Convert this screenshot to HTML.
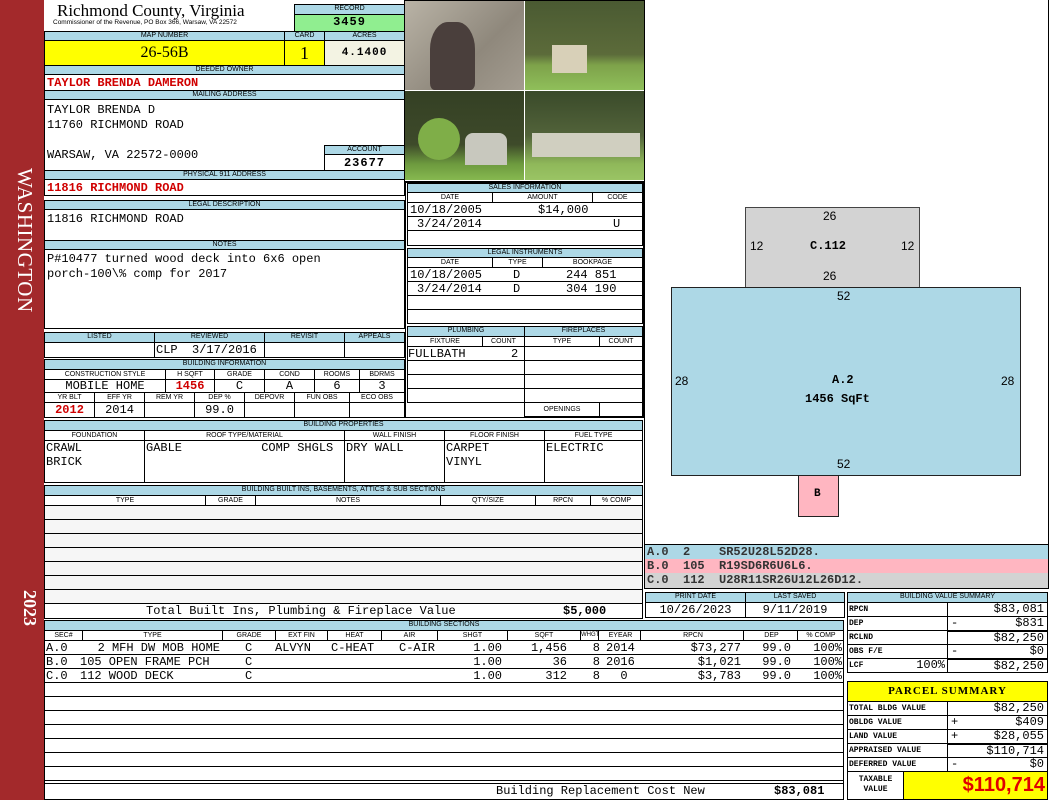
<!DOCTYPE html>
<html><head><meta charset="utf-8"><style>
*{margin:0;padding:0}
body{width:1050px;height:800px;position:relative;background:#fff;overflow:hidden;font-family:"Liberation Sans",sans-serif}
.a{position:absolute;box-sizing:border-box}
.h{position:absolute;box-sizing:border-box;background:#add8e6;border:1px solid #000;font:7px/8px "Liberation Sans",sans-serif;text-align:center;color:#000;white-space:nowrap;overflow:hidden}
.l{position:absolute;box-sizing:border-box;background:#fff;border:1px solid #000;font:7px/9px "Liberation Sans",sans-serif;text-align:center;white-space:nowrap;overflow:hidden}
.c{position:absolute;box-sizing:border-box;background:#fff;border:1px solid #000;font:12px/13px "Liberation Mono",monospace;white-space:nowrap;overflow:hidden}
.m{font:12px/14px "Liberation Mono",monospace;white-space:pre}
.t{position:absolute;font:12px/14px "Liberation Mono",monospace;white-space:pre}
.tr{position:absolute;font:12px/14px "Liberation Mono",monospace;white-space:pre;text-align:right}
.r{color:#d00000;font-weight:bold}
.ctr{text-align:center}.rt{text-align:right;padding-right:3px}
.vr{position:absolute;width:1px;background:#000}
</style></head><body>
<div class="a" style="left:0;top:0;width:44px;height:800px;background:#a3292b"></div>
<div class="a" style="left:7px;top:153px;width:30px;height:175px;color:#fff;font:21px 'Liberation Serif',serif;writing-mode:vertical-rl;text-align:center;letter-spacing:0.5px">WASHINGTON</div>
<div class="a" style="left:10px;top:590px;width:30px;height:50px;color:#fff;font:bold 18px 'Liberation Serif',serif;writing-mode:vertical-rl">2023</div>

<div class="a" style="left:57px;top:2px;font:17px/18px 'Liberation Serif',serif">Richmond County, Virginia</div>
<div class="a" style="left:53px;top:19px;font:6.5px/8px 'Liberation Sans',sans-serif">Commissioner of the Revenue, PO Box 366, Warsaw, VA 22572</div>
<div class="h" style="left:294px;top:4px;width:111px;height:11px">RECORD</div>
<div class="c ctr" style="left:294px;top:14px;width:111px;height:18px;background:#90ee90;font-weight:bold;letter-spacing:1px;line-height:15px">3459</div>

<div class="h" style="left:44px;top:31px;width:241px;height:10px">MAP NUMBER</div>
<div class="h" style="left:284px;top:31px;width:41px;height:10px">CARD</div>
<div class="h" style="left:324px;top:31px;width:81px;height:10px">ACRES</div>
<div class="c ctr" style="left:44px;top:40px;width:241px;height:26px;background:#ffff00;font:16px/24px 'Liberation Serif',serif">26-56B</div>
<div class="c ctr" style="left:284px;top:40px;width:41px;height:26px;background:#ffff00;font:18px/24px 'Liberation Serif',serif">1</div>
<div class="c ctr" style="left:324px;top:40px;width:81px;height:26px;background:#f3f3e3;font-weight:bold;font-size:11px;line-height:24px;letter-spacing:1px">4.1400</div>

<div class="h" style="left:44px;top:65px;width:361px;height:10px">DEEDED OWNER</div>
<div class="c r" style="left:44px;top:74px;width:361px;height:17px;padding-left:2px;line-height:17px">TAYLOR BRENDA DAMERON</div>
<div class="h" style="left:44px;top:90px;width:361px;height:10px">MAILING ADDRESS</div>
<div class="c m" style="left:44px;top:99px;width:361px;height:72px;padding:3px 2px;line-height:15px">TAYLOR BRENDA D
11760 RICHMOND ROAD

WARSAW, VA 22572-0000</div>
<div class="h" style="left:324px;top:145px;width:81px;height:10px">ACCOUNT</div>
<div class="c ctr" style="left:324px;top:154px;width:81px;height:17px;font-weight:bold;letter-spacing:1px;line-height:16px">23677</div>
<div class="h" style="left:44px;top:170px;width:361px;height:10px">PHYSICAL 911 ADDRESS</div>
<div class="c r" style="left:44px;top:179px;width:361px;height:17px;padding-left:2px;line-height:17px">11816 RICHMOND ROAD</div>

<div class="h" style="left:44px;top:200px;width:361px;height:10px">LEGAL DESCRIPTION</div>
<div class="c m" style="left:44px;top:209px;width:361px;height:32px;padding:2px">11816 RICHMOND ROAD</div>
<div class="h" style="left:44px;top:240px;width:361px;height:10px">NOTES</div>
<div class="c m" style="left:44px;top:249px;width:361px;height:80px;padding:2px 2px;line-height:15px">P#10477 turned wood deck into 6x6 open
porch-100\% comp for 2017</div>

<div class="h" style="left:44px;top:332px;width:111px;height:11px">LISTED</div>
<div class="h" style="left:154px;top:332px;width:111px;height:11px">REVIEWED</div>
<div class="h" style="left:264px;top:332px;width:81px;height:11px">REVISIT</div>
<div class="h" style="left:344px;top:332px;width:61px;height:11px">APPEALS</div>
<div class="c" style="left:44px;top:342px;width:111px;height:16px"></div>
<div class="c m" style="left:154px;top:342px;width:111px;height:16px;padding-left:1px">CLP  3/17/2016</div>
<div class="c" style="left:264px;top:342px;width:81px;height:16px"></div>
<div class="c" style="left:344px;top:342px;width:61px;height:16px"></div>

<div class="h" style="left:44px;top:359px;width:361px;height:11px">BUILDING INFORMATION</div>
<div class="l" style="left:44px;top:369px;width:122px;height:11px">CONSTRUCTION STYLE</div>
<div class="l" style="left:165px;top:369px;width:50px;height:11px">H SQFT</div>
<div class="l" style="left:214px;top:369px;width:51px;height:11px">GRADE</div>
<div class="l" style="left:264px;top:369px;width:51px;height:11px">COND</div>
<div class="l" style="left:314px;top:369px;width:46px;height:11px">ROOMS</div>
<div class="l" style="left:359px;top:369px;width:46px;height:11px">BDRMS</div>
<div class="c ctr" style="left:44px;top:379px;width:122px;height:14px;line-height:13px">MOBILE HOME</div>
<div class="c ctr r" style="left:165px;top:379px;width:50px;height:14px;line-height:13px">1456</div>
<div class="c ctr" style="left:214px;top:379px;width:51px;height:14px;line-height:13px">C</div>
<div class="c ctr" style="left:264px;top:379px;width:51px;height:14px;line-height:13px">A</div>
<div class="c ctr" style="left:314px;top:379px;width:46px;height:14px;line-height:13px">6</div>
<div class="c ctr" style="left:359px;top:379px;width:46px;height:14px;line-height:13px">3</div>
<div class="l" style="left:44px;top:392px;width:51px;height:11px">YR BLT</div>
<div class="l" style="left:94px;top:392px;width:51px;height:11px">EFF YR</div>
<div class="l" style="left:144px;top:392px;width:51px;height:11px">REM YR</div>
<div class="l" style="left:194px;top:392px;width:51px;height:11px">DEP %</div>
<div class="l" style="left:244px;top:392px;width:51px;height:11px">DEPOVR</div>
<div class="l" style="left:294px;top:392px;width:56px;height:11px">FUN OBS</div>
<div class="l" style="left:349px;top:392px;width:56px;height:11px">ECO OBS</div>
<div class="c ctr r" style="left:44px;top:402px;width:51px;height:16px;line-height:15px">2012</div>
<div class="c ctr" style="left:94px;top:402px;width:51px;height:16px;line-height:15px">2014</div>
<div class="c" style="left:144px;top:402px;width:51px;height:16px"></div>
<div class="c ctr" style="left:194px;top:402px;width:51px;height:16px;line-height:15px">99.0</div>
<div class="c" style="left:244px;top:402px;width:51px;height:16px"></div>
<div class="c" style="left:294px;top:402px;width:56px;height:16px"></div>
<div class="c" style="left:349px;top:402px;width:56px;height:16px"></div>

<!-- photos -->
<div class="a" style="left:404px;top:0;width:241px;height:182px;background:#fff;border:1px solid #000"></div>
<div class="a" style="left:405px;top:1px;width:119px;height:89px;background:linear-gradient(135deg,#b9b3a6,#8f887c 60%,#a39c90)"></div>
<div class="a" style="left:430px;top:22px;width:45px;height:68px;background:#4a3f3c;border-radius:40% 40% 10% 10%"></div>
<div class="a" style="left:525px;top:1px;width:119px;height:89px;background:linear-gradient(180deg,#4a5a32,#5c6b3a 60%,#7ea24a 72%,#8fbf5a)"></div>
<div class="a" style="left:552px;top:45px;width:35px;height:28px;background:#d8d0b8"></div>
<div class="a" style="left:405px;top:91px;width:119px;height:89px;background:linear-gradient(180deg,#344024,#3e4a2a 60%,#6d9a3e 82%,#86b850)"></div>
<div class="a" style="left:465px;top:133px;width:42px;height:32px;background:#c8c8be;border-radius:8px 8px 0 0"></div>
<div class="a" style="left:418px;top:118px;width:42px;height:42px;background:#7fae48;border-radius:50%"></div>
<div class="a" style="left:525px;top:91px;width:119px;height:89px;background:linear-gradient(180deg,#3a4a2a,#52633a 50%,#8fb85a 82%,#9ac464)"></div>
<div class="a" style="left:532px;top:133px;width:108px;height:24px;background:#d0cfc0"></div>

<!-- sales -->
<div class="a" style="left:405px;top:182px;width:239px;height:236px;border:1px solid #000;background:#fff"></div>
<div class="h" style="left:407px;top:183px;width:236px;height:10px">SALES INFORMATION</div>
<div class="l" style="left:407px;top:192px;width:86px;height:11px">DATE</div>
<div class="l" style="left:492px;top:192px;width:101px;height:11px">AMOUNT</div>
<div class="l" style="left:592px;top:192px;width:51px;height:11px">CODE</div>
<div class="c" style="left:407px;top:202px;width:236px;height:15px"></div>
<div class="c" style="left:407px;top:216px;width:236px;height:15px"></div>
<div class="c" style="left:407px;top:230px;width:236px;height:16px"></div>
<div class="t" style="left:410px;top:203px">10/18/2005</div>
<div class="t" style="left:538px;top:203px">$14,000</div>
<div class="t" style="left:417px;top:217px">3/24/2014</div>
<div class="t" style="left:613px;top:217px">U</div>
<div class="h" style="left:407px;top:248px;width:236px;height:10px">LEGAL INSTRUMENTS</div>
<div class="l" style="left:407px;top:257px;width:86px;height:11px">DATE</div>
<div class="l" style="left:492px;top:257px;width:51px;height:11px">TYPE</div>
<div class="l" style="left:542px;top:257px;width:101px;height:11px">BOOKPAGE</div>
<div class="c" style="left:407px;top:267px;width:236px;height:15px"></div>
<div class="c" style="left:407px;top:281px;width:236px;height:15px"></div>
<div class="c" style="left:407px;top:295px;width:236px;height:15px"></div>
<div class="c" style="left:407px;top:309px;width:236px;height:15px"></div>
<div class="t" style="left:410px;top:268px">10/18/2005</div>
<div class="t" style="left:513px;top:268px">D</div>
<div class="t" style="left:566px;top:268px">244 851</div>
<div class="t" style="left:417px;top:282px">3/24/2014</div>
<div class="t" style="left:513px;top:282px">D</div>
<div class="t" style="left:566px;top:282px">304 190</div>
<div class="h" style="left:407px;top:326px;width:118px;height:11px">PLUMBING</div>
<div class="h" style="left:524px;top:326px;width:119px;height:11px">FIREPLACES</div>
<div class="l" style="left:407px;top:336px;width:76px;height:11px">FIXTURE</div>
<div class="l" style="left:482px;top:336px;width:43px;height:11px">COUNT</div>
<div class="l" style="left:524px;top:336px;width:76px;height:11px">TYPE</div>
<div class="l" style="left:599px;top:336px;width:44px;height:11px">COUNT</div>
<div class="c" style="left:407px;top:346px;width:118px;height:15px"></div>
<div class="t" style="left:408px;top:347px">FULLBATH</div>
<div class="t" style="left:511px;top:347px">2</div>
<div class="c" style="left:407px;top:360px;width:118px;height:15px"></div>
<div class="c" style="left:407px;top:374px;width:118px;height:15px"></div>
<div class="c" style="left:407px;top:388px;width:118px;height:15px"></div>
<div class="c" style="left:524px;top:346px;width:119px;height:15px"></div>
<div class="c" style="left:524px;top:360px;width:119px;height:15px"></div>
<div class="c" style="left:524px;top:374px;width:119px;height:15px"></div>
<div class="c" style="left:524px;top:388px;width:119px;height:15px"></div>
<div class="l" style="left:524px;top:402px;width:76px;height:15px;line-height:13px">OPENINGS</div>
<div class="c" style="left:599px;top:402px;width:44px;height:15px"></div>

<!-- building properties -->
<div class="h" style="left:44px;top:420px;width:599px;height:11px">BUILDING PROPERTIES</div>
<div class="l" style="left:44px;top:430px;width:101px;height:11px">FOUNDATION</div>
<div class="l" style="left:144px;top:430px;width:201px;height:11px">ROOF TYPE/MATERIAL</div>
<div class="l" style="left:344px;top:430px;width:101px;height:11px">WALL FINISH</div>
<div class="l" style="left:444px;top:430px;width:101px;height:11px">FLOOR FINISH</div>
<div class="l" style="left:544px;top:430px;width:99px;height:11px">FUEL TYPE</div>
<div class="c m" style="left:44px;top:440px;width:101px;height:43px;padding:0 1px">CRAWL
BRICK</div>
<div class="c m" style="left:144px;top:440px;width:201px;height:43px;padding:0 1px">GABLE           COMP SHGLS</div>
<div class="c m" style="left:344px;top:440px;width:101px;height:43px;padding:0 1px">DRY WALL</div>
<div class="c m" style="left:444px;top:440px;width:101px;height:43px;padding:0 1px">CARPET
VINYL</div>
<div class="c m" style="left:544px;top:440px;width:99px;height:43px;padding:0 1px">ELECTRIC</div>

<!-- built ins -->
<div class="h" style="left:44px;top:485px;width:599px;height:11px">BUILDING BUILT INS, BASEMENTS, ATTICS &amp; SUB SECTIONS</div>
<div class="l" style="left:44px;top:495px;width:162px;height:11px">TYPE</div>
<div class="l" style="left:205px;top:495px;width:51px;height:11px">GRADE</div>
<div class="l" style="left:255px;top:495px;width:186px;height:11px">NOTES</div>
<div class="l" style="left:440px;top:495px;width:96px;height:11px">QTY/SIZE</div>
<div class="l" style="left:535px;top:495px;width:56px;height:11px">RPCN</div>
<div class="l" style="left:590px;top:495px;width:53px;height:11px">% COMP</div>
<div class="a" style="left:44px;top:505px;width:599px;height:99px;border:1px solid #000;background:repeating-linear-gradient(180deg,#f6f6f6 0 13px,#000 13px 14px)"></div>
<div class="c" style="left:44px;top:603px;width:599px;height:16px"></div>
<div class="t" style="left:146px;top:604px">Total Built Ins, Plumbing &amp; Fireplace Value</div>
<div class="t" style="left:563px;top:604px;font-weight:bold">$5,000</div>

<!-- building sections -->
<div class="h" style="left:44px;top:620px;width:800px;height:11px">BUILDING SECTIONS</div>
<div class="a" style="left:44px;top:630px;width:800px;height:11px;border:1px solid #000;background:#fff;font:7px/9px 'Liberation Sans',sans-serif">
<span class="a" style="left:0;width:37px;text-align:center">SEC#</span>
<span class="a" style="left:38px;width:139px;text-align:center">TYPE</span>
<span class="a" style="left:178px;width:52px;text-align:center">GRADE</span>
<span class="a" style="left:231px;width:51px;text-align:center">EXT FIN</span>
<span class="a" style="left:283px;width:53px;text-align:center">HEAT</span>
<span class="a" style="left:337px;width:55px;text-align:center">AIR</span>
<span class="a" style="left:393px;width:69px;text-align:center">SHGT</span>
<span class="a" style="left:463px;width:72px;text-align:center">SQFT</span>
<span class="a" style="left:536px;width:18px;text-align:center;font-size:6px">WHGT</span>
<span class="a" style="left:555px;width:41px;text-align:center">EYEAR</span>
<span class="a" style="left:597px;width:102px;text-align:center">RPCN</span>
<span class="a" style="left:700px;width:53px;text-align:center">DEP</span>
<span class="a" style="left:754px;width:44px;text-align:center">% COMP</span>
</div>
<div class="vr" style="left:82px;top:630px;height:11px"></div><div class="vr" style="left:222px;top:630px;height:11px"></div><div class="vr" style="left:275px;top:630px;height:11px"></div><div class="vr" style="left:327px;top:630px;height:11px"></div><div class="vr" style="left:381px;top:630px;height:11px"></div><div class="vr" style="left:437px;top:630px;height:11px"></div><div class="vr" style="left:507px;top:630px;height:11px"></div><div class="vr" style="left:580px;top:630px;height:11px"></div><div class="vr" style="left:598px;top:630px;height:11px"></div><div class="vr" style="left:640px;top:630px;height:11px"></div><div class="vr" style="left:743px;top:630px;height:11px"></div><div class="vr" style="left:797px;top:630px;height:11px"></div>
<div class="a" style="left:44px;top:640px;width:800px;height:144px;border:1px solid #000;background:repeating-linear-gradient(180deg,#fff 0 13px,#000 13px 14px)"></div>
<div class="t" style="left:46px;top:641px">A.0
B.0
C.0</div>
<div class="tr" style="left:84px;top:641px;width:136px">2 MFH DW MOB HOME</div>
<div class="t" style="left:80px;top:655px">105 OPEN FRAME PCH
112 WOOD DECK</div>
<div class="t" style="left:245px;top:641px">C
C
C</div>
<div class="t" style="left:275px;top:641px">ALVYN</div>
<div class="t" style="left:331px;top:641px">C-HEAT</div>
<div class="t" style="left:399px;top:641px">C-AIR</div>
<div class="tr" style="left:440px;top:641px;width:62px">1.00
1.00
1.00</div>
<div class="tr" style="left:510px;top:641px;width:57px">1,456
36
312</div>
<div class="tr" style="left:580px;top:641px;width:20px">8
8
8</div>
<div class="t" style="left:606px;top:641px">2014
2016
  0</div>
<div class="tr" style="left:640px;top:641px;width:101px">$73,277
$1,021
$3,783</div>
<div class="tr" style="left:745px;top:641px;width:46px">99.0
99.0
99.0</div>
<div class="tr" style="left:797px;top:641px;width:45px">100%
100%
100%</div>
<div class="c" style="left:44px;top:783px;width:800px;height:17px"></div>
<div class="t" style="left:496px;top:784px">Building Replacement Cost New</div>
<div class="t" style="left:774px;top:784px;font-weight:bold">$83,081</div>

<!-- right panel -->
<div class="a" style="left:644px;top:0;width:405px;height:589px;border:1px solid #000;border-top:none;background:#fff"></div>
<div class="a" style="left:745px;top:207px;width:175px;height:81px;background:#d3d3d3;border:1px solid #444"></div>
<div class="a" style="left:671px;top:287px;width:350px;height:189px;background:#add8e6;border:1px solid #222"></div>
<div class="a" style="left:798px;top:475px;width:41px;height:42px;background:#ffb6c1;border:1px solid #222"></div>
<div class="a" style="left:823px;top:209px;font:12px 'Liberation Sans',sans-serif">26</div>
<div class="a" style="left:750px;top:239px;font:12px 'Liberation Sans',sans-serif">12</div>
<div class="a" style="left:901px;top:239px;font:12px 'Liberation Sans',sans-serif">12</div>
<div class="a" style="left:810px;top:239px;font:bold 12px 'Liberation Mono',monospace">C.112</div>
<div class="a" style="left:823px;top:269px;font:12px 'Liberation Sans',sans-serif">26</div>
<div class="a" style="left:837px;top:289px;font:12px 'Liberation Sans',sans-serif">52</div>
<div class="a" style="left:675px;top:374px;font:12px 'Liberation Sans',sans-serif">28</div>
<div class="a" style="left:1001px;top:374px;font:12px 'Liberation Sans',sans-serif">28</div>
<div class="a" style="left:832px;top:373px;font:bold 12px 'Liberation Mono',monospace">A.2</div>
<div class="a" style="left:805px;top:392px;font:bold 12px 'Liberation Mono',monospace">1456 SqFt</div>
<div class="a" style="left:837px;top:457px;font:12px 'Liberation Sans',sans-serif">52</div>
<div class="a" style="left:814px;top:488px;font:bold 11px 'Liberation Mono',monospace">B</div>

<div class="a" style="left:644px;top:544px;width:405px;height:1px;background:#000"></div>
<div class="a m" style="left:645px;top:545px;width:403px;height:14px;background:#add8e6;font-weight:bold;color:#333;padding-left:2px">A.0  2    SR52U28L52D28.</div>
<div class="a m" style="left:645px;top:559px;width:403px;height:14px;background:#ffb6c1;font-weight:bold;color:#333;padding-left:2px">B.0  105  R19SD6R6U6L6.</div>
<div class="a m" style="left:645px;top:573px;width:403px;height:15px;background:#d3d3d3;font-weight:bold;color:#333;padding-left:2px">C.0  112  U28R11SR26U12L26D12.</div>

<div class="h" style="left:645px;top:592px;width:101px;height:11px">PRINT DATE</div>
<div class="h" style="left:745px;top:592px;width:100px;height:11px">LAST SAVED</div>
<div class="c ctr" style="left:645px;top:602px;width:101px;height:16px;line-height:15px">10/26/2023</div>
<div class="c ctr" style="left:745px;top:602px;width:100px;height:16px;line-height:15px">9/11/2019</div>

<div class="h" style="left:847px;top:592px;width:201px;height:11px">BUILDING VALUE SUMMARY</div>
<div class="c" style="left:847px;top:602px;width:101px;height:15px;font:bold 8px/13px 'Liberation Mono',monospace;padding-left:1px">RPCN</div>
<div class="c rt" style="left:947px;top:602px;width:101px;height:15px">$83,081</div>
<div class="c" style="left:847px;top:616px;width:101px;height:15px;font:bold 8px/13px 'Liberation Mono',monospace;padding-left:1px">DEP</div>
<div class="c rt" style="left:947px;top:616px;width:101px;height:15px"><span style="float:left;padding-left:3px">-</span>$831</div>
<div class="c" style="left:847px;top:630px;width:101px;height:15px;font:bold 8px/13px 'Liberation Mono',monospace;padding-left:1px">RCLND</div>
<div class="c rt" style="left:947px;top:630px;width:101px;height:15px;border-top:2px solid #000">$82,250</div>
<div class="c" style="left:847px;top:644px;width:101px;height:15px;font:bold 8px/13px 'Liberation Mono',monospace;padding-left:1px">OBS F/E</div>
<div class="c rt" style="left:947px;top:644px;width:101px;height:15px"><span style="float:left;padding-left:3px">-</span>$0</div>
<div class="c" style="left:847px;top:658px;width:101px;height:15px;font:bold 8px/13px 'Liberation Mono',monospace;padding-left:1px">LCF<span style="float:right;font:12px/13px 'Liberation Mono',monospace;padding-right:2px">100%</span></div>
<div class="c rt" style="left:947px;top:658px;width:101px;height:15px;border-top:2px solid #000">$82,250</div>

<div class="c ctr" style="left:847px;top:681px;width:201px;height:21px;background:#ffff00;font:bold 11px/19px 'Liberation Serif',serif;letter-spacing:1px">PARCEL SUMMARY</div>
<div class="c" style="left:847px;top:701px;width:101px;height:15px;font:bold 8px/13px 'Liberation Mono',monospace;padding-left:1px">TOTAL BLDG VALUE</div>
<div class="c rt" style="left:947px;top:701px;width:101px;height:15px">$82,250</div>
<div class="c" style="left:847px;top:715px;width:101px;height:15px;font:bold 8px/13px 'Liberation Mono',monospace;padding-left:1px">OBLDG VALUE</div>
<div class="c rt" style="left:947px;top:715px;width:101px;height:15px"><span style="float:left;padding-left:3px">+</span>$409</div>
<div class="c" style="left:847px;top:729px;width:101px;height:15px;font:bold 8px/13px 'Liberation Mono',monospace;padding-left:1px">LAND VALUE</div>
<div class="c rt" style="left:947px;top:729px;width:101px;height:15px"><span style="float:left;padding-left:3px">+</span>$28,055</div>
<div class="c" style="left:847px;top:743px;width:101px;height:15px;font:bold 8px/13px 'Liberation Mono',monospace;padding-left:1px">APPRAISED VALUE</div>
<div class="c rt" style="left:947px;top:743px;width:101px;height:15px;border-top:2px solid #000">$110,714</div>
<div class="c" style="left:847px;top:757px;width:101px;height:15px;font:bold 8px/13px 'Liberation Mono',monospace;padding-left:1px">DEFERRED VALUE</div>
<div class="c rt" style="left:947px;top:757px;width:101px;height:15px"><span style="float:left;padding-left:3px">-</span>$0</div>
<div class="c ctr" style="left:847px;top:771px;width:57px;height:29px;font:bold 8px/10px 'Liberation Mono',monospace;padding-top:3px">TAXABLE<br>VALUE</div>
<div class="c" style="left:903px;top:771px;width:145px;height:29px;background:#ffff00;color:#e00000;font:bold 20px/27px 'Liberation Sans',sans-serif;text-align:right;padding-right:2px">$110,714</div>
</body></html>
